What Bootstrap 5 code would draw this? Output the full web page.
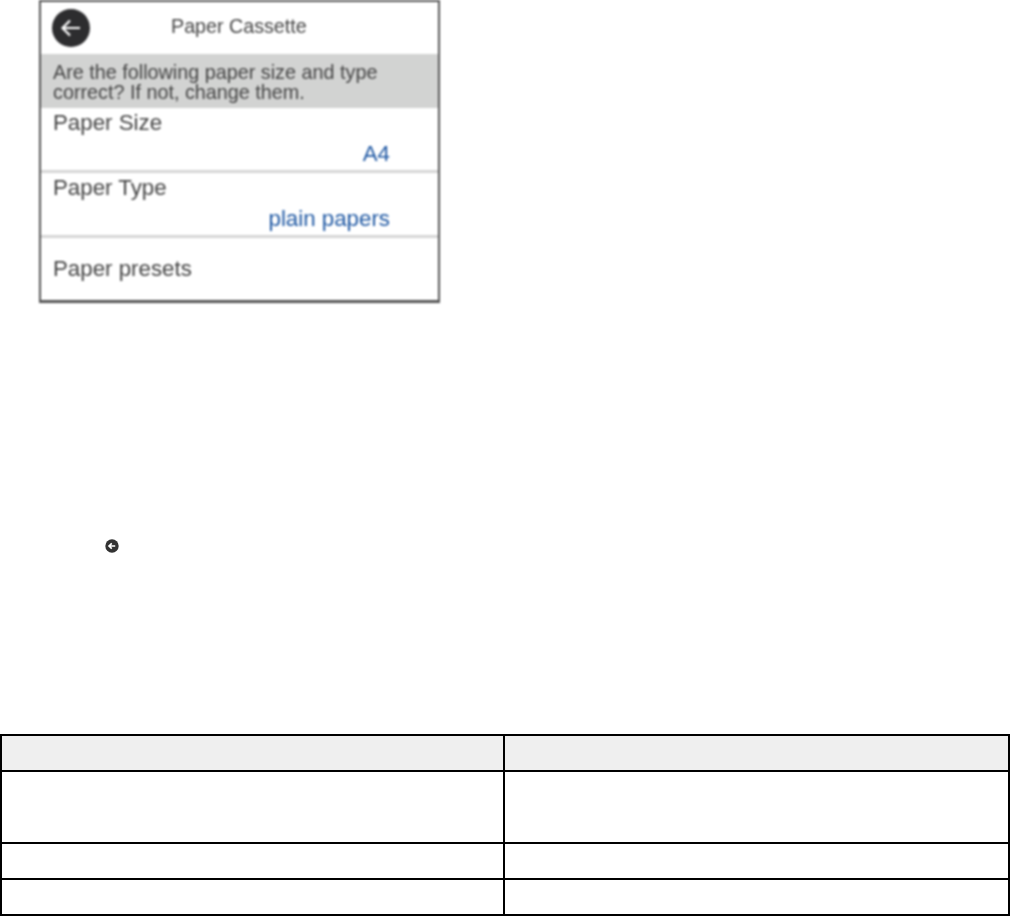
<!DOCTYPE html>
<html lang="en">
<head>
  <meta charset="UTF-8">
  <title>Paper Cassette</title>
  <link href="https://cdn.jsdelivr.net/npm/bootstrap@5.3.2/dist/css/bootstrap.min.css" rel="stylesheet">
  <style>
    body {
      background-color: #fff;
      font-family: "Liberation Sans", Arial, sans-serif;
      width: 1010px;
      height: 916px;
      overflow: hidden;
    }
    .lcd-panel {
      width: 401px;
      height: 303px;
      margin-left: 39px;
      border: 2px solid #555;
      border-bottom-width: 3px;
      color: #444;
      font-size: 22.300px;
      line-height: 1;
      filter: blur(0.8px);
    }
    .lcd-head {
      height: 52px;
      padding-left: 11px;
    }
    .lcd-back {
      width: 38px;
      height: 38px;
      flex: none;
    }
    .lcd-title {
      font-size: 19.700px;
      margin-left: 81px;
      margin-top: -3px;
    }
    .lcd-note {
      height: 54px;
      background-color: #d2d3d2;
      padding: 8px 0 0 12px;
      font-size: 19.800px;
      line-height: 20px;
    }
    .lcd-row {
      border-bottom: 3px solid #d6d6d6;
      padding: 4px 48px 0 12px;
      height: 65px;
    }
    .lcd-row:last-child {
      border-bottom: 0;
      height: auto;
      padding-top: 20px;
    }
    .lcd-value {
      color: #1f58a3;
      text-align: right;
      margin-top: 9px;
    }
    .back-mini {
      display: block;
      width: 14px;
      height: 14px;
      margin: 236px 0 0 105px;
      filter: blur(0.4px);
    }
    .spec-table {
      width: 1010px;
      margin-top: 181px;
      table-layout: fixed;
      border-collapse: separate;
      border-spacing: 0;
      border-top: 2px solid #000;
      border-left: 2px solid #000;
    }
    .spec-table th, .spec-table td {
      border-right: 2px solid #000;
      border-bottom: 2px solid #000;
      padding: 0;
    }
    .spec-table th {
      height: 36px;
      background-color: #efefef;
    }
    .spec-table .col-left {
      width: 503px;
    }
    .row-tall td {
      height: 72px;
    }
    .row-short td {
      height: 36px;
    }
  </style>
</head>
<body>

<div class="lcd-panel">
  <div class="lcd-head d-flex align-items-center">
    <svg class="lcd-back" viewBox="0 0 38 38">
      <circle cx="19" cy="19" r="19" fill="#2d2d2f"/>
      <path d="M28 19H11M18 11.500L10.500 19L18 26.500" fill="none" stroke="#fff" stroke-width="2.200"/>
    </svg>
    <div class="lcd-title">Paper Cassette</div>
  </div>
  <div class="lcd-note">Are the following paper size and type<br>correct? If not, change them.</div>
  <div class="lcd-row">
    <div>Paper Size</div>
    <div class="lcd-value">A4</div>
  </div>
  <div class="lcd-row">
    <div>Paper Type</div>
    <div class="lcd-value">plain papers</div>
  </div>
  <div class="lcd-row">
    <div>Paper presets</div>
  </div>
</div>

<svg class="back-mini" viewBox="0 0 13 13">
  <circle cx="6.500" cy="6.500" r="6.200" fill="#333"/>
  <path d="M9.500 6.500H4M6.300 4L3.700 6.500L6.300 9" fill="none" stroke="#fff" stroke-width="1.500"/>
</svg>

<table class="spec-table">
  <tr>
    <th class="col-left"></th>
    <th></th>
  </tr>
  <tr class="row-tall">
    <td></td>
    <td></td>
  </tr>
  <tr class="row-short">
    <td></td>
    <td></td>
  </tr>
  <tr class="row-short">
    <td></td>
    <td></td>
  </tr>
</table>

<script src="https://cdn.jsdelivr.net/npm/bootstrap@5.3.2/dist/js/bootstrap.bundle.min.js"></script>

</body>
</html>
